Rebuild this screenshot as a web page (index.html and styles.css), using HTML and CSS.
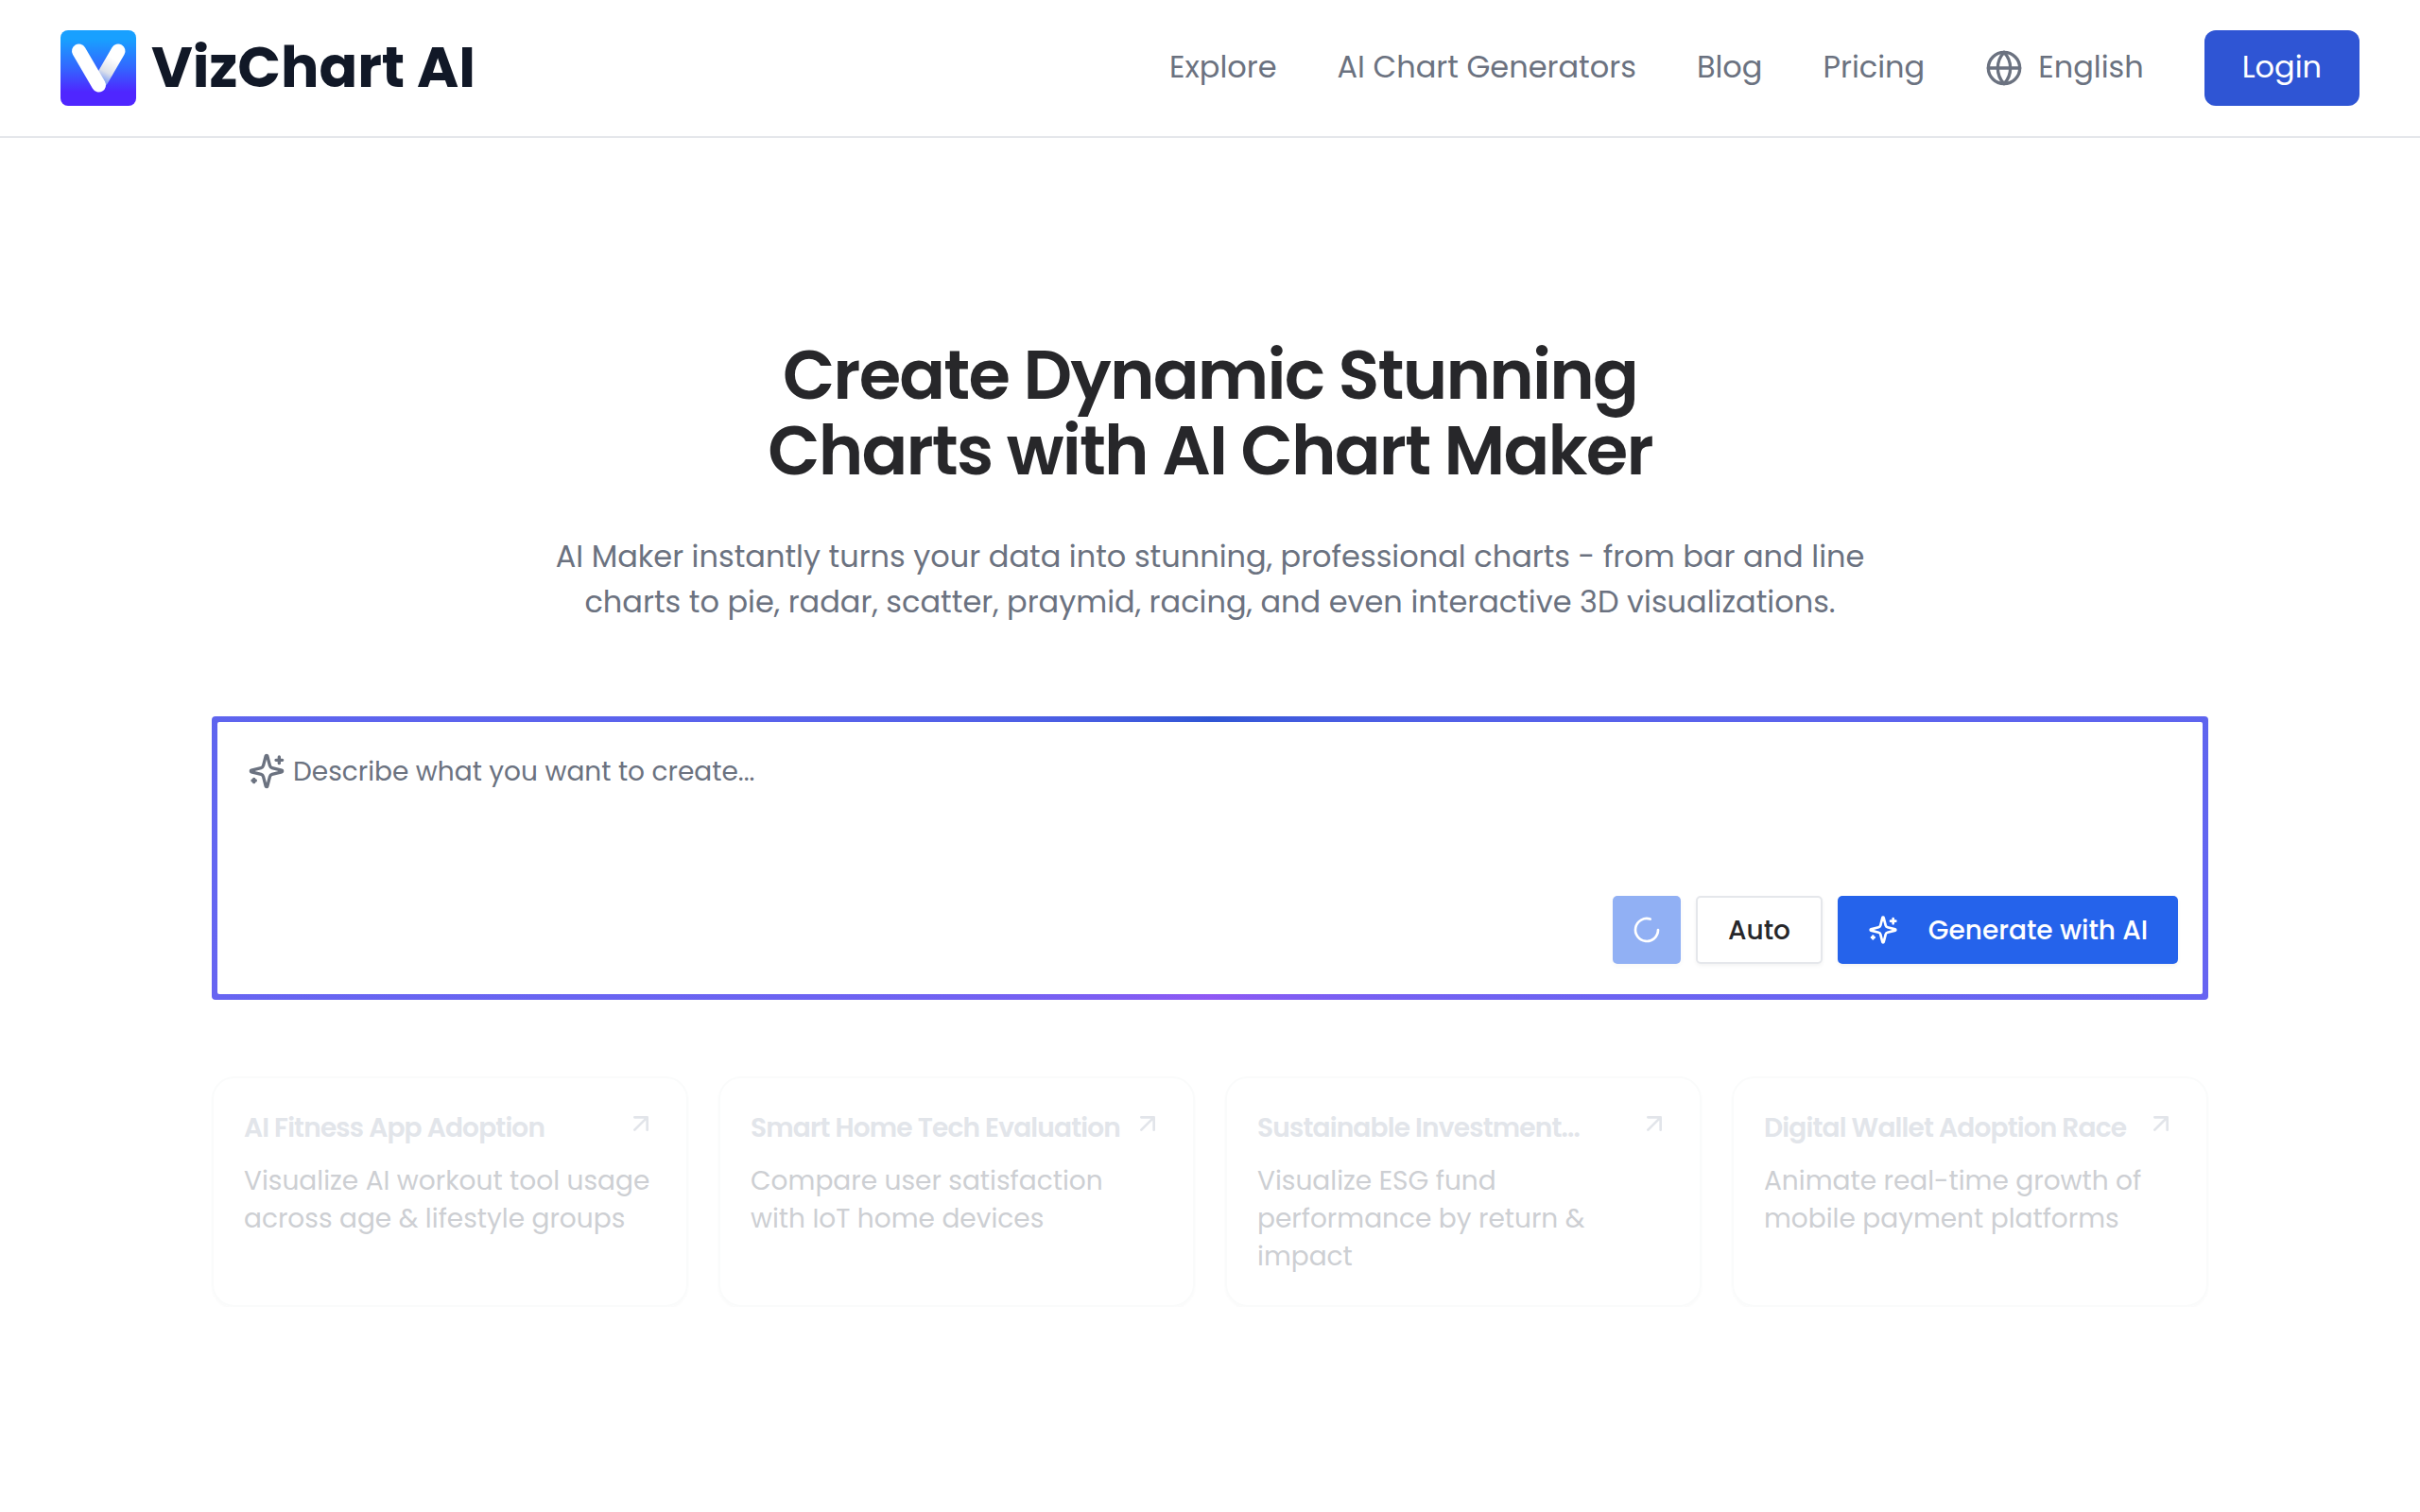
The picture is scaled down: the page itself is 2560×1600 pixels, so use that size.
FILE: index.html
```html
<!DOCTYPE html>
<html lang="en">
<head>
    <meta charset="UTF-8">
    <meta name="viewport" content="width=device-width, initial-scale=1.0">
    <title>VizChart AI</title>
    <link rel="stylesheet" href="styles.css">
</head>
<body>
    <header class="header">
        <a class="brand" href="#">
            <svg class="brand-logo" viewBox="0 0 80 80">
                <defs>
                    <linearGradient id="logoBg" x1="0" y1="0" x2="0" y2="1">
                        <stop offset="0.12" stop-color="#18a0ff"/>
                        <stop offset="0.5" stop-color="#3366ff"/>
                        <stop offset="0.82" stop-color="#4f26ff"/>
                    </linearGradient>
                    <linearGradient id="logoArm" x1="60" y1="22" x2="44" y2="54" gradientUnits="userSpaceOnUse">
                        <stop offset="0.25" stop-color="#ffffff"/>
                        <stop offset="0.7" stop-color="#dde1ea"/>
                        <stop offset="1" stop-color="#7f9ff5"/>
                    </linearGradient>
                </defs>
                <rect width="80" height="80" rx="8" fill="url(#logoBg)"/>
                <path d="M61 22 43 53" stroke="url(#logoArm)" stroke-width="15" stroke-linecap="round"/>
                <path d="M19.500 22 40.500 58" stroke="#fff" stroke-width="15" stroke-linecap="round"/>
            </svg>
            <span class="brand-name">VizChart AI</span>
        </a>
        <nav class="nav">
            <a class="nav-link" href="#">Explore</a>
            <a class="nav-link" href="#">AI Chart Generators</a>
            <a class="nav-link" href="#">Blog</a>
            <a class="nav-link" href="#">Pricing</a>
            <a class="nav-lang" href="#">
                <svg class="icon icon-lg" viewBox="0 0 24 24"><circle cx="12" cy="12" r="10"/><path d="M12 2a14.500 14.500 0 0 0 0 20 14.500 14.500 0 0 0 0-20"/><path d="M2 12h20"/></svg>
                <span class="nav-link">English</span>
            </a>
            <a class="btn-login" href="#">Login</a>
        </nav>
    </header>

    <main class="main">
        <h1 class="title">Create Dynamic Stunning<br>Charts with AI Chart Maker</h1>
        <p class="subtitle">AI Maker instantly turns your data into stunning, professional charts - from bar and line<br>charts to pie, radar, scatter, praymid, racing, and even interactive 3D visualizations.</p>

        <section class="prompt">
            <div class="prompt-inner">
                <div class="prompt-field">
                    <svg class="icon icon-lg" viewBox="0 0 24 24"><path d="M9.937 15.500A2 2 0 0 0 8.500 14.063l-6.135-1.582a.5.5 0 0 1 0-.962L8.500 9.936A2 2 0 0 0 9.937 8.500l1.582-6.135a.5.5 0 0 1 .963 0L14.063 8.500A2 2 0 0 0 15.500 9.937l6.135 1.581a.5.5 0 0 1 0 .964L15.500 14.063a2 2 0 0 0-1.437 1.437l-1.582 6.135a.5.5 0 0 1-.963 0z"/><path d="M20 3v4M22 5h-4M4 17v2M5 18H3"/></svg>
                    <span class="label">Describe what you want to create...</span>
                </div>
                <div class="prompt-actions">
                    <button class="btn btn-loading"><svg class="icon" viewBox="0 0 24 24"><path d="M21 12a9 9 0 1 1-6.219-8.560"/></svg></button>
                    <button class="btn btn-auto"><span class="label">Auto</span></button>
                    <button class="btn btn-generate">
                        <svg class="icon" viewBox="0 0 24 24"><path d="M9.937 15.500A2 2 0 0 0 8.500 14.063l-6.135-1.582a.5.5 0 0 1 0-.962L8.500 9.936A2 2 0 0 0 9.937 8.500l1.582-6.135a.5.5 0 0 1 .963 0L14.063 8.500A2 2 0 0 0 15.500 9.937l6.135 1.581a.5.5 0 0 1 0 .964L15.500 14.063a2 2 0 0 0-1.437 1.437l-1.582 6.135a.5.5 0 0 1-.963 0z"/><path d="M20 3v4M22 5h-4M4 17v2M5 18H3"/></svg>
                        <span class="label">Generate with AI</span>
                    </button>
                </div>
            </div>
        </section>

        <section class="cards">
            <article class="card">
                <div class="card-head">
                    <h3>AI Fitness App Adoption</h3>
                    <svg class="icon" viewBox="0 0 24 24"><path d="M7 7h10v10M7 17 17 7"/></svg>
                </div>
                <p>Visualize AI workout tool usage across age &amp; lifestyle groups</p>
            </article>
            <article class="card">
                <div class="card-head">
                    <h3>Smart Home Tech Evaluation</h3>
                    <svg class="icon" viewBox="0 0 24 24"><path d="M7 7h10v10M7 17 17 7"/></svg>
                </div>
                <p>Compare user satisfaction with IoT home devices</p>
            </article>
            <article class="card">
                <div class="card-head">
                    <h3>Sustainable Investment...</h3>
                    <svg class="icon" viewBox="0 0 24 24"><path d="M7 7h10v10M7 17 17 7"/></svg>
                </div>
                <p>Visualize ESG fund performance by return &amp; impact</p>
            </article>
            <article class="card">
                <div class="card-head">
                    <h3>Digital Wallet Adoption Race</h3>
                    <svg class="icon" viewBox="0 0 24 24"><path d="M7 7h10v10M7 17 17 7"/></svg>
                </div>
                <p>Animate real-time growth of mobile payment platforms</p>
            </article>
        </section>
    </main>
</body>
</html>
```
FILE: styles.css
```css
* {
    box-sizing: border-box;
}
body {
    margin: 0;
    font-family: Poppins, Inter, sans-serif;
    background: #fff;
    color: #27272a;
}
a {
    color: inherit;
    text-decoration: none;
}
h1, h3, p {
    margin: 0;
}
.icon {
    width: 32px;
    height: 32px;
    flex-shrink: 0;
    fill: none;
    stroke: currentColor;
    stroke-width: 2;
    stroke-linecap: round;
    stroke-linejoin: round;
}
.icon-lg {
    width: 40px;
    height: 40px;
}
.label {
    padding-top: 2px;
}

/* header */
.header {
    display: flex;
    justify-content: space-between;
    align-items: center;
    height: 146px;
    padding: 0 64px;
    border-bottom: 2px solid #e5e7eb;
}
.brand {
    display: flex;
    align-items: center;
    gap: 16px;
}
.brand-logo {
    width: 80px;
    height: 80px;
    fill: none;
}
.brand-name {
    padding-bottom: 2px;
    font-size: 60px;
    font-weight: 700;
    line-height: 72px;
    color: #111827;
    white-space: nowrap;
}
.nav {
    display: flex;
    align-items: center;
    gap: 64px;
    font-size: 32px;
    line-height: 48px;
    color: #6b7280;
    white-space: nowrap;
}
.nav-link {
    padding-bottom: 2px;
}
.nav-lang {
    display: flex;
    align-items: center;
    gap: 16px;
}
.btn-login {
    padding: 15px 40px 17px;
    border-radius: 12px;
    background: #2f55d4;
    color: #fff;
}

/* hero */
.main {
    width: 2112px;
    margin: 0 auto;
    padding-top: 211px;
}
.title {
    font-size: 72px;
    font-weight: 600;
    line-height: 80px;
    letter-spacing: -0.025em;
    text-align: center;
}
.subtitle {
    margin-top: 48px;
    font-size: 32px;
    line-height: 48px;
    text-align: center;
    color: #6b7280;
}

/* prompt box */
.prompt {
    height: 300px;
    margin-top: 97px;
    padding: 6px;
    border-radius: 4px;
    background: conic-gradient(#2f55d4, #6366f1 25%, #9058f4 50%, #6366f1 75%, #2f55d4);
}
.prompt-inner {
    display: flex;
    flex-direction: column;
    justify-content: space-between;
    height: 100%;
    padding: 32px 26px 32px 32px;
    border-radius: 2px;
    background: #fff;
}
.prompt-field {
    display: flex;
    align-items: center;
    gap: 8px;
    height: 40px;
    font-size: 28px;
    color: #6b7280;
}
.prompt-actions {
    display: flex;
    justify-content: flex-end;
    gap: 16px;
}
.btn {
    display: flex;
    align-items: center;
    justify-content: center;
    height: 72px;
    padding: 0;
    border: 0;
    border-radius: 5px;
    font: inherit;
    font-size: 28px;
    font-weight: 500;
    line-height: 40px;
    background: #2563eb;
    color: #fff;
    box-shadow: 0 2px 4px rgba(0, 0, 0, 0.05);
}
.btn-loading {
    width: 72px;
    opacity: 0.5;
}
.btn-auto {
    width: 134px;
    border: 2px solid #e5e7eb;
    background: #fff;
    color: #27272a;
}
.btn-generate {
    gap: 32px;
    width: 360px;
}

/* suggestion cards */
.cards {
    display: grid;
    grid-template-columns: repeat(4, 1fr);
    gap: 32px;
    margin-top: 81px;
}
.card {
    height: 244px;
    padding: 32px;
    border: 2px solid #fafbfb;
    border-radius: 24px;
    box-shadow: 0 2px 3px rgba(0, 0, 0, 0.025);
}
.card-head {
    display: flex;
    justify-content: space-between;
    height: 40px;
    color: #e2e5ea;
}
.card h3 {
    padding-top: 1px;
    font-size: 28px;
    font-weight: 600;
    line-height: 40px;
    letter-spacing: -0.8px;
    white-space: nowrap;
}
.card p {
    margin-top: 17px;
    font-size: 28px;
    line-height: 40px;
    color: #cdcfd3;
}
```
